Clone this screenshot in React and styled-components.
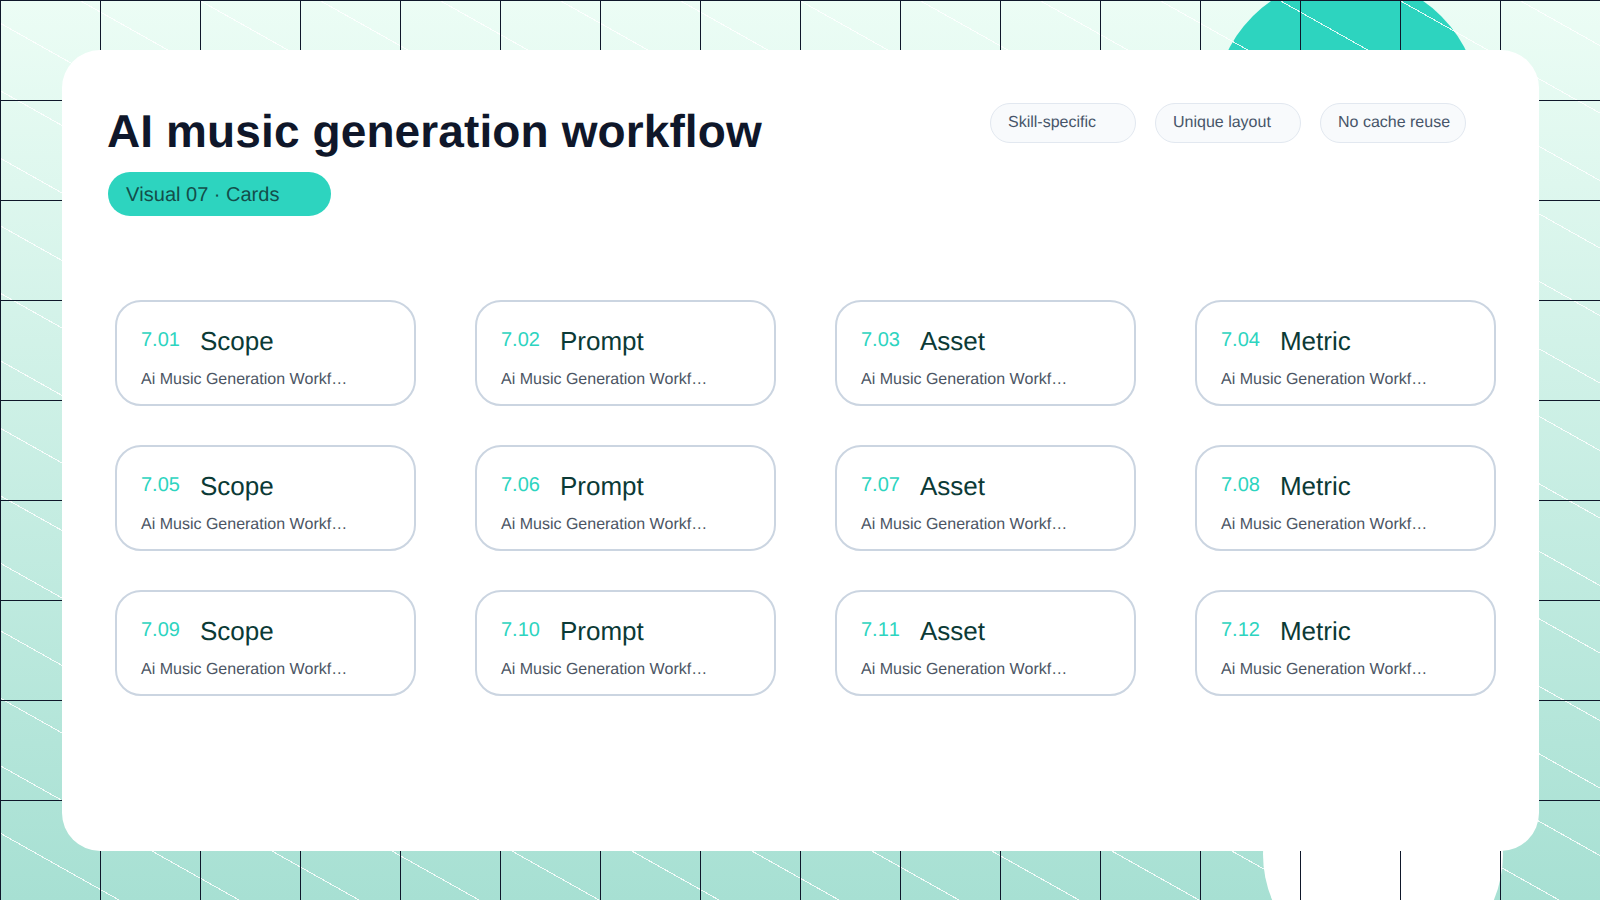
import React from 'react';
import styled, { createGlobalStyle } from 'styled-components';

const GlobalStyle = createGlobalStyle`
  html, body {
    margin: 0;
    padding: 0;
    width: 1600px;
    height: 900px;
    overflow: hidden;
    font-family: "Liberation Sans", Arial, sans-serif;
    text-rendering: geometricPrecision;
    font-kerning: none;
  }
`;

const Stage = styled.div`
  position: relative;
  width: 1600px;
  height: 900px;
  overflow: hidden;
  box-sizing: border-box;
  padding: 50px 61px 49px 62px;
  background: linear-gradient(180deg, #ecfdf5 0%, #a7e0d3 100%);
`;

const Blob = styled.div`
  position: absolute;
  border-radius: 50%;
  left: ${p => p.$cx - p.$r}px;
  top: ${p => p.$cy - p.$r}px;
  width: ${p => p.$r * 2}px;
  height: ${p => p.$r * 2}px;
  background: ${p => p.$color};
`;

const Stripes = styled.div`
  position: absolute;
  inset: 0;
  background-image: repeating-linear-gradient(to top right, transparent 0 57.83px, rgba(255, 255, 255, 0.85) 57.83px 58.83px);
`;

const Lattice = styled.div`
  position: absolute;
  inset: 0;
  background-image:
    linear-gradient(#0f172a 1px, transparent 1px),
    linear-gradient(90deg, #0f172a 1px, transparent 1px);
  background-size: 100px 100px;
`;

const Panel = styled.main`
  position: relative;
  height: 100%;
  box-sizing: border-box;
  background: #fff;
  border-radius: 38px;
  padding: 52px 44px 0 46px;
`;

const Head = styled.header`
  display: flex;
  justify-content: space-between;
  align-items: flex-start;
  padding-right: 29px;
`;

const Title = styled.h1`
  margin: 3px 0 0 -1px;
  font-size: 46px;
  line-height: 53px;
  font-weight: 700;
  letter-spacing: 0.11px;
  color: #0f172a;
`;

const Tag = styled.div`
  display: inline-flex;
  align-items: center;
  box-sizing: border-box;
  width: 223px;
  height: 44px;
  margin-top: 14px;
  padding: 2px 0 0 18px;
  border-radius: 22px;
  background: #2dd4bf;
  color: #134e4a;
  font-size: 20px;
`;

const Chips = styled.div`
  display: flex;
  gap: 19px;
  margin-top: 1px;
`;

const Chip = styled.span`
  box-sizing: border-box;
  width: 146px;
  height: 40px;
  padding: 0 17px;
  display: flex;
  align-items: center;
  white-space: nowrap;
  border: 1px solid #e2e8f0;
  border-radius: 20px;
  background: #f8fafc;
  color: #475569;
  font-size: 16px;
`;

const Cards = styled.section`
  display: grid;
  grid-template-columns: repeat(4, 300.5px);
  grid-auto-rows: 105.5px;
  gap: 39.5px 59.5px;
  margin-top: 84px;
  margin-left: 7px;
`;

const Card = styled.article`
  box-sizing: border-box;
  padding: 24px 24px 0;
  border: 2px solid #cbd5e1;
  border-radius: 26px;
  background: #fff;
`;

const CardTop = styled.div`
  display: flex;
  align-items: center;
  gap: 20px;
`;

const Num = styled.span`
  margin-top: -2px;
  color: #2dd4bf;
  font-size: 20px;
`;

const Name = styled.span`
  color: #0b3a36;
  font-size: 26px;
`;

const Desc = styled.p`
  margin: 14px 0 0;
  color: #4b5563;
  font-size: 16px;
`;

const names = ['Scope', 'Prompt', 'Asset', 'Metric'];

const items = Array.from({ length: 12 }, (_, i) => ({
  num: `7.${String(i + 1).padStart(2, '0')}`,
  name: names[i % 4],
}));

export default function App() {
  return (
    <Stage>
      <GlobalStyle />
      <Blob $cx={1347} $cy={110} $r={133} $color="#2dd4bf" />
      <Blob $cx={1383} $cy={854} $r={120} $color="#fff" />
      <Stripes />
      <Lattice />
      <Panel>
        <Head>
          <div>
            <Title>AI music generation workflow</Title>
            <Tag>Visual 07 · Cards</Tag>
          </div>
          <Chips>
            <Chip>Skill-specific</Chip>
            <Chip>Unique layout</Chip>
            <Chip>No cache reuse</Chip>
          </Chips>
        </Head>
        <Cards>
          {items.map(item => (
            <Card key={item.num}>
              <CardTop>
                <Num>{item.num}</Num>
                <Name>{item.name}</Name>
              </CardTop>
              <Desc>Ai Music Generation Workf…</Desc>
            </Card>
          ))}
        </Cards>
      </Panel>
    </Stage>
  );
}
